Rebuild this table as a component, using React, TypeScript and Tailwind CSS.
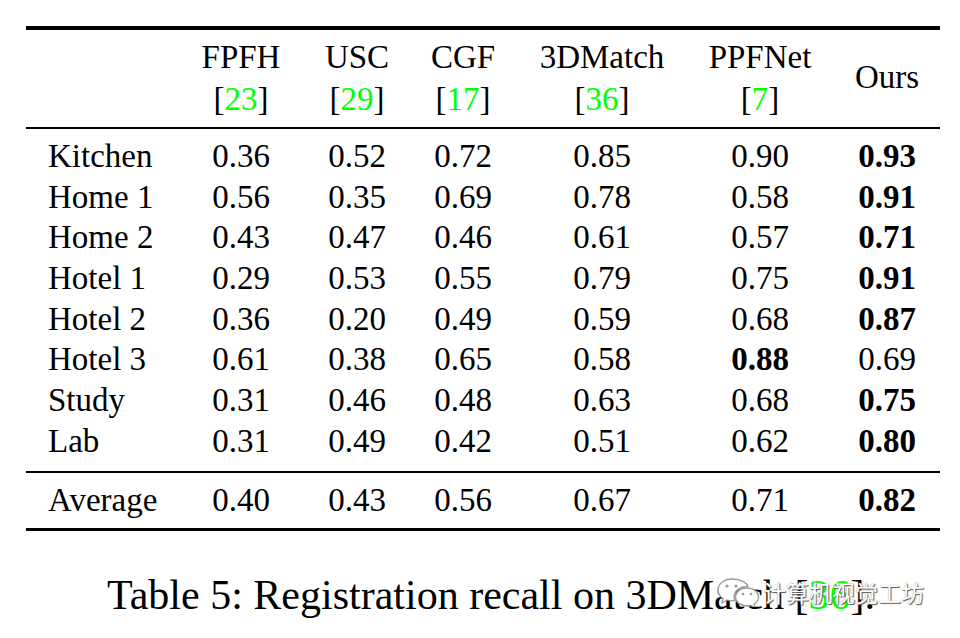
const cols = "grid grid-cols-[164px_102px_130px_82px_196px_120px_14px_106px]";

const rows: { name: string; v: string[]; bold: number }[] = [
  { name: "Kitchen", v: ["0.36", "0.52", "0.72", "0.85", "0.90", "0.93"], bold: 5 },
  { name: "Home 1", v: ["0.56", "0.35", "0.69", "0.78", "0.58", "0.91"], bold: 5 },
  { name: "Home 2", v: ["0.43", "0.47", "0.46", "0.61", "0.57", "0.71"], bold: 5 },
  { name: "Hotel 1", v: ["0.29", "0.53", "0.55", "0.79", "0.75", "0.91"], bold: 5 },
  { name: "Hotel 2", v: ["0.36", "0.20", "0.49", "0.59", "0.68", "0.87"], bold: 5 },
  { name: "Hotel 3", v: ["0.61", "0.38", "0.65", "0.58", "0.88", "0.69"], bold: 4 },
  { name: "Study", v: ["0.31", "0.46", "0.48", "0.63", "0.68", "0.75"], bold: 5 },
  { name: "Lab", v: ["0.31", "0.49", "0.42", "0.51", "0.62", "0.80"], bold: 5 },
];

const heads = [
  { t: "FPFH", r: "23" },
  { t: "USC", r: "29" },
  { t: "CGF", r: "17" },
  { t: "3DMatch", r: "36" },
  { t: "PPFNet", r: "7" },
];

function Row({ name, v, bold }: { name: string; v: string[]; bold: number }) {
  return (
    <div className={`${cols} h-[40.7px] leading-[40.7px]`}>
      <div className="pl-[22px]">{name}</div>
      {v.slice(0, 5).map((x, i) => (
        <div key={i} className={`text-center ${i === bold ? "font-bold" : ""}`}>{x}</div>
      ))}
      <div />
      <div className={`text-center ${bold === 5 ? "font-bold" : ""}`}>{v[5]}</div>
    </div>
  );
}

function WeChatIcon() {
  return (
    <svg width="44" height="30" viewBox="0 0 44 30" fill="#fff" stroke="#9a9a9a" strokeWidth="1.3">
      <path d="M16 2C8 2 2 7 2 13c0 3.5 2 6.5 5 8.5L6 26l5-3c1.6.5 3.3.7 5 .7 1 0 1.8 0 2.6-.2C18 22 18 21 18 20c0-6 6-10.5 13-10.5h1C30.5 5 24 2 16 2z" />
      <path d="M31 11c-6.5 0-11.5 4-11.5 9s5 9 11.5 9c1.4 0 2.7-.2 4-.5l4 2.2-.9-3.6c2.7-1.7 4.4-4.2 4.4-7.1 0-5-5-9-11.5-9z" />
      <circle cx="11" cy="9" r="1.6" fill="#9a9a9a" stroke="none" />
      <circle cx="20" cy="9" r="1.6" fill="#9a9a9a" stroke="none" />
      <circle cx="27" cy="17" r="1.3" fill="#9a9a9a" stroke="none" />
      <circle cx="35" cy="17" r="1.3" fill="#9a9a9a" stroke="none" />
    </svg>
  );
}

export default function App() {
  return (
    <div className="relative w-[960px] h-[638px] overflow-hidden bg-white text-black text-[33px] font-['Liberation_Serif','Times_New_Roman',serif]">
      <div className="pt-[26px] pl-[26px]">
        <div className="w-[914px]">
          {/* Header */}
          <div className="border-t-4 border-black pt-[6px] pb-[7px]">
            <div className={`${cols} leading-[42px]`}>
              <div />
              {heads.map((h) => (
                <div key={h.t} className="text-center">
                  <div>{h.t}</div>
                  <div>
                    [<span className="text-[#00ff00]">{h.r}</span>]
                  </div>
                </div>
              ))}
              <div />
              <div className="text-center self-center -mt-[2px]">Ours</div>
            </div>
          </div>

          {/* Body */}
          <div className="border-t-2 border-black pt-[7px] pb-[9.4px]">
            {rows.map((r) => (
              <Row key={r.name} {...r} />
            ))}
          </div>

          {/* Average */}
          <div className="border-t-2 border-b-[3px] border-black pt-[7px] pb-[7.3px]">
            <Row name="Average" v={["0.40", "0.43", "0.56", "0.67", "0.71", "0.82"]} bold={5} />
          </div>
        </div>
      </div>

      {/* Caption */}
      <div className="mt-[40px] pl-[107px] text-[42px] leading-[48px]">
        Table 5: Registration recall on 3DMatch [<span className="text-[#00ff00]">36</span>].
      </div>

      {/* Watermark */}
      <div className="absolute left-[716px] top-[577px] flex items-center gap-[3px]">
        <WeChatIcon />
        <span className="text-[23px] leading-[28px] text-white font-['Noto_Sans_CJK_SC',sans-serif] [text-shadow:1px_1px_1px_#555,0_0_1px_#888]">
          计算机视觉工坊
        </span>
      </div>
    </div>
  );
}
